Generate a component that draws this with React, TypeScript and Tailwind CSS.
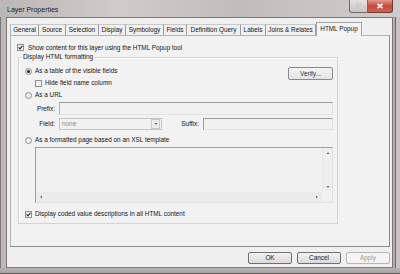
import React from 'react';

const font = "font-['Liberation_Sans',Arial,sans-serif]";

const tabs = [
  { label: 'General', w: 'w-[29px]' },
  { label: 'Source', w: 'w-[27px]' },
  { label: 'Selection', w: 'w-[33px]' },
  { label: 'Display', w: 'w-[27px]' },
  { label: 'Symbology', w: 'w-[38px]' },
  { label: 'Fields', w: 'w-[23px]' },
  { label: 'Definition Query', w: 'w-[54px]' },
  { label: 'Labels', w: 'w-[25px]' },
  { label: 'Joins & Relates', w: 'w-[50px]' },
];

const CheckBox = ({ checked }: { checked?: boolean }) => (
  <span className="flex w-[7px] h-[7px] shrink-0 border border-[#8e8f8f] bg-[linear-gradient(135deg,#e6e6e6,#fbfbfb)]">
    {checked && (
      <svg viewBox="0 0 5 5" className="w-[5px] h-[5px]">
        <path d="M0.6 2.4 L2 3.9 L4.4 0.8" stroke="#2a2a2a" strokeWidth="1.1" fill="none" />
      </svg>
    )}
  </span>
);

const Radio = ({ checked }: { checked?: boolean }) => (
  <span className="flex items-center justify-center w-[7px] h-[7px] shrink-0 rounded-full border border-[#8e8f8f] bg-[linear-gradient(135deg,#e2e2e2,#fafafa)]">
    {checked && <span className="w-[3px] h-[3px] rounded-full bg-[#222]" />}
  </span>
);

const Button = ({ label, disabled }: { label: string; disabled?: boolean }) => (
  <div
    className={
      disabled
        ? 'flex items-center justify-center w-[44px] h-[12px] rounded-[2px] border border-[#b5b5b5] bg-[#f4f4f4] text-[#9a9a9a]'
        : 'flex items-center justify-center w-[44px] h-[12px] rounded-[2px] border border-[#707070] bg-[linear-gradient(#f3f3f3,#e6e6e6_50%,#dadada)] text-[#1a1a1a]'
    }
  >
    {label}
  </div>
);

const Arrow = ({ dir }: { dir: 'up' | 'down' | 'left' | 'right' }) => {
  const d = {
    up: 'M0.5 3 L2 1 L3.5 3 Z',
    down: 'M0.5 1 L2 3 L3.5 1 Z',
    left: 'M3 0.5 L1 2 L3 3.5 Z',
    right: 'M1 0.5 L3 2 L1 3.5 Z',
  }[dir];
  return (
    <svg viewBox="0 0 4 4" className="w-[4px] h-[4px]">
      <path d={d} fill="#707070" />
    </svg>
  );
};

export default function App() {
  return (
    <div className={`${font} w-[400px] h-[274px] overflow-hidden flex flex-col bg-[linear-gradient(90deg,#bcb7b7,#cfcbcb_30%,#c2bdbd_60%,#d0cccc)] text-[6.4px] leading-[8px] text-[#141414]`}>
      {/* title bar */}
      <div className="flex h-[17px] shrink-0 items-start justify-between">
        <div className="pl-[7px] pt-[6px] text-[7px] text-[#1c1c1c]">Layer Properties</div>
        <div className="flex mr-[7px]">
          <div className="flex items-center justify-center w-[19px] h-[13px] rounded-bl-[3px] border border-t-0 border-[#6e6a6a] bg-[linear-gradient(#e4e1e1,#c9c5c5)] text-[7px] text-[#f4f4f4] font-bold [text-shadow:0_0_1px_#555]">
            ?
          </div>
          <div className="flex items-center justify-center w-[25px] h-[13px] rounded-br-[3px] border border-t-0 border-l-0 border-[#6e3a34] bg-[linear-gradient(#e39a8a,#c5483a_50%,#d4624c)]">
            <svg viewBox="0 0 8 6" className="w-[8px] h-[6px]">
              <path d="M1.5 0.8 L6.5 5.2 M6.5 0.8 L1.5 5.2" stroke="#fff" strokeWidth="1.6" />
            </svg>
          </div>
        </div>
      </div>

      {/* middle */}
      <div className="flex h-[251px] shrink-0">
        <div className="w-[6px] shrink-0 border-l border-[#7d7878]" />
        <div className="w-[387px] shrink-0 border border-[#7c7676] bg-[#f0f0f0] flex flex-col">
          {/* tabs */}
          <div className="flex items-end h-[13px] mt-[4px] ml-[3px]">
            {tabs.map((t) => (
              <div
                key={t.label}
                className={`${t.w} h-[11px] flex items-center justify-center border-t border-r border-t-[#c8c8c8] border-r-[#9c9c9c] first:border-l first:border-l-[#b0b0b0] bg-[#f0f0f0]`}
              >
                {t.label}
              </div>
            ))}
            <div className="relative z-10 w-[46px] h-[14px] -mb-px flex items-center justify-center pb-[2px] border border-b-0 border-[#a4a4a4] bg-[#f4f4f4]">
              HTML Popup
            </div>
          </div>

          {/* panel */}
          <div className="ml-[3px] w-[380px] h-[212px] border border-[#b4b4b4] border-r-[#8c8c8c] border-b-[#8c8c8c] bg-[#f2f2f2] flex flex-col">
            <div className="flex items-center gap-[4px] h-[9px] mt-[7px] ml-[6px]">
              <CheckBox checked />
              <span>Show content for this layer using the HTML Popup tool</span>
            </div>

            <fieldset className="mt-[1px] ml-[7px] w-[320px] border border-[#d3d3d3] shadow-[inset_1px_1px_0_#fff] px-0 pb-[4px]">
              <legend className="ml-[3px] px-[1px] leading-[8px]">Display HTML formatting</legend>
              <div className="flex flex-col pl-[6px] pr-[4px]">
                <div className="flex justify-between mt-[5px]">
                  <div className="flex flex-col">
                    <div className="flex items-center gap-[3px] h-[10px]">
                      <Radio checked />
                      <span>As a table of the visible fields</span>
                    </div>
                    <div className="flex items-center gap-[3px] h-[10px] mt-[2px] ml-[10px]">
                      <CheckBox />
                      <span>Hide field name column</span>
                    </div>
                  </div>
                  <div className="mt-[1px] h-[14px] flex">
                    <div className="flex items-center justify-center w-[45px] h-[13px] rounded-[2px] border border-[#8a8a8a] bg-[linear-gradient(#f4f4f4,#e4e4e4)] text-[#333]">
                      Verify...
                    </div>
                  </div>
                </div>

                <div className="flex items-center gap-[3px] h-[10px] mt-[2px]">
                  <Radio />
                  <span>As a URL</span>
                </div>

                <div className="flex items-center h-[13px] mt-[2px]">
                  <span className="w-[34px] text-right pr-[4px]">Prefix:</span>
                  <div className="w-[274px] h-[13px] border border-[#e2e2e2] border-t-[#9e9e9e] border-l-[#b4b4b4] bg-[#f1f1f1]" />
                </div>

                <div className="flex items-center h-[12px] mt-[3px]">
                  <span className="w-[34px] text-right pr-[4px]">Field:</span>
                  <div className="w-[103px] h-[12px] flex items-center border border-[#c6c6c6] bg-[#f1f1f1]">
                    <span className="flex-1 pl-[2px] text-[#8c8c8c]">none</span>
                    <div className="w-[9px] h-[10px] mr-px flex items-center justify-center border border-[#c9c9c9] bg-[#ececec]">
                      <Arrow dir="down" />
                    </div>
                  </div>
                  <span className="w-[41px] text-right pr-[4px]">Suffix:</span>
                  <div className="w-[130px] h-[12px] border border-[#e2e2e2] border-t-[#9e9e9e] border-l-[#9e9e9e] bg-[#f1f1f1]" />
                </div>

                <div className="flex items-center gap-[3px] h-[10px] mt-[5px]">
                  <Radio />
                  <span>As a formatted page based on an XSL template</span>
                </div>

                <div className="ml-[10px] mt-[2px] w-[298px] h-[56px] flex flex-col border border-[#e2e2e2] border-t-[#9e9e9e] border-l-[#9e9e9e] bg-[#f1f1f1]">
                  <div className="flex flex-1">
                    <div className="flex-1" />
                    <div className="w-[10px] flex flex-col items-center justify-between py-[3px] bg-[#eeeeee] border-l border-[#e6e6e6]">
                      <Arrow dir="up" />
                      <Arrow dir="down" />
                    </div>
                  </div>
                  <div className="flex h-[10px]">
                    <div className="flex-1 flex items-center justify-between px-[3px] bg-[#ebebeb]">
                      <Arrow dir="left" />
                      <Arrow dir="right" />
                    </div>
                    <div className="w-[10px] bg-[#f1f1f1]" />
                  </div>
                </div>

                <div className="flex items-center gap-[3px] h-[10px] mt-[6px]">
                  <CheckBox checked />
                  <span>Display coded value descriptions in all HTML content</span>
                </div>
              </div>
            </fieldset>
          </div>

          {/* dialog buttons */}
          <div className="ml-[3px] w-[380px] mt-[5px] flex justify-end gap-[5px]">
            <Button label="OK" />
            <Button label="Cancel" />
            <Button label="Apply" disabled />
          </div>
        </div>
        <div className="w-[7px] shrink-0 flex">
          <div className="w-[2px] bg-[#b5b0b0]" />
          <div className="w-px bg-[#6c6666]" />
          <div className="flex-1 bg-[#c9c5c5]" />
        </div>
      </div>

      {/* bottom frame */}
      <div className="flex-1 border-b border-[#5f5959] bg-[linear-gradient(#b8b3b3,#a9a4a4)]" />
    </div>
  );
}
